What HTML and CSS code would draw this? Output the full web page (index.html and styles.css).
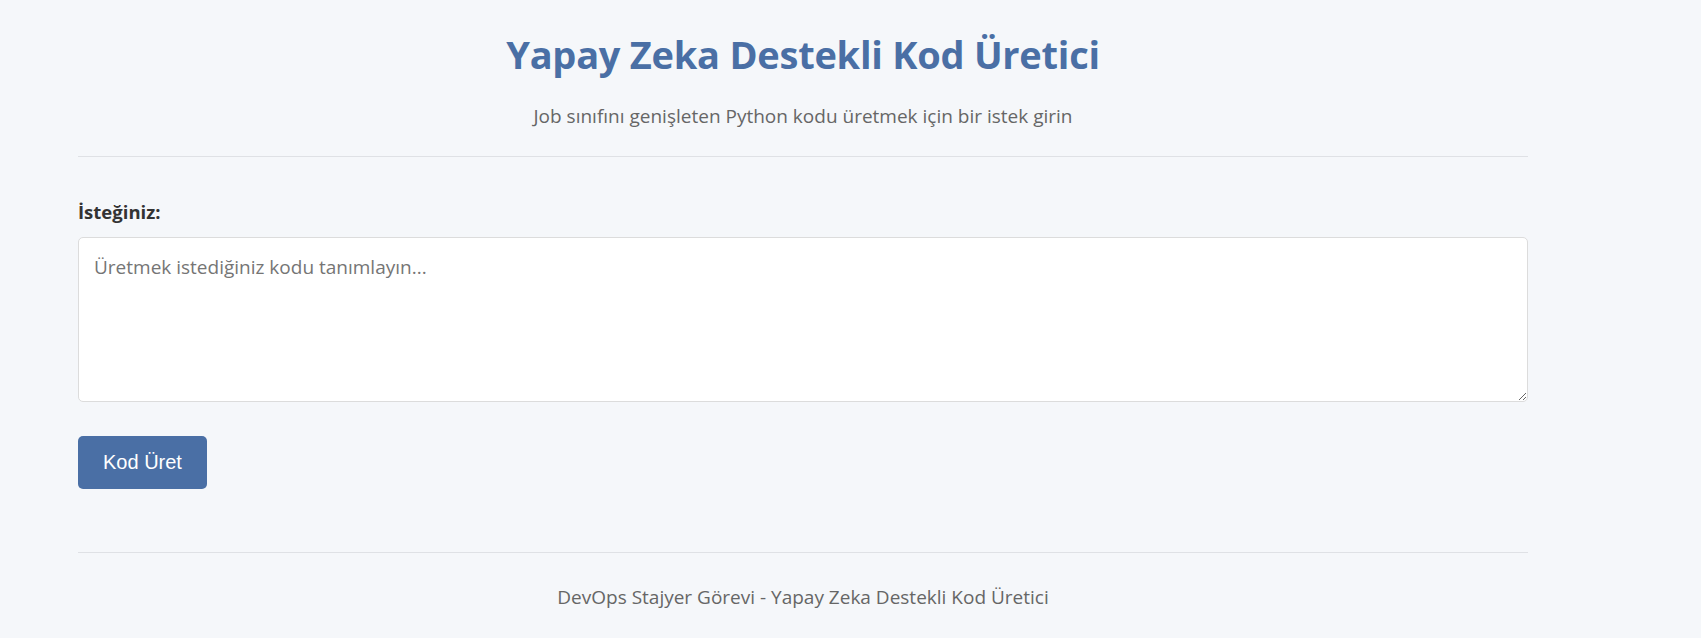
FILE: index.html
```html
<!DOCTYPE html>
<html lang="tr">
<head>
<meta charset="utf-8">
<title>Yapay Zeka Destekli Kod Üretici</title>
<link rel="stylesheet" href="styles.css">
</head>
<body>
<div class="container">
  <header class="header">
    <h1 class="title">Yapay Zeka Destekli Kod Üretici</h1>
    <p class="subtitle">Job sınıfını genişleten Python kodu üretmek için bir istek girin</p>
  </header>
  <main class="form">
    <label class="label" for="prompt">İsteğiniz:</label>
    <textarea id="prompt" class="input" placeholder="Üretmek istediğiniz kodu tanımlayın..."></textarea>
    <button class="btn" type="button">Kod Üret</button>
  </main>
  <footer class="footer">
    <p class="footer-text">DevOps Stajyer Görevi - Yapay Zeka Destekli Kod Üretici</p>
  </footer>
</div>
</body>
</html>
```
FILE: styles.css
```css
html, body {
  margin: 0;
  padding: 0;
  background: #f5f7fa;
}
body {
  font-family: "Open Sans", "Noto Sans", sans-serif;
  color: #333;
}
.container {
  width: 1450px;
  margin-left: 78px;
  display: flex;
  flex-direction: column;
}
.header {
  text-align: center;
  border-bottom: 1px solid #dfe1e5;
  padding-bottom: 25px;
}
.title {
  margin: 30px 0 0;
  font-size: 38px;
  line-height: 48px;
  letter-spacing: -0.25px;
  font-weight: 700;
  color: #4a6fa5;
}
.subtitle {
  margin: 23px 0 0;
  font-size: 19px;
  line-height: 30px;
  color: #666;
}
.form {
  display: flex;
  flex-direction: column;
  align-items: flex-start;
  padding-top: 40px;
}
.label {
  font-size: 18.5px;
  line-height: 30px;
  font-weight: 700;
  color: #333;
}
.input {
  margin-top: 10px;
  width: 100%;
  height: 165px;
  box-sizing: border-box;
  padding: 17px 15px 15px;
  border: 1px solid #dcdcdc;
  border-radius: 5px;
  background: #fff;
  font-family: "Open Sans", "Noto Sans", sans-serif;
  font-size: 19px;
  line-height: 24px;
  color: #333;
  resize: vertical;
}
.input::placeholder {
  color: #757575;
}
.btn {
  margin-top: 34px;
  padding: 15px 25px;
  border: none;
  border-radius: 5px;
  background: #4a6fa5;
  color: #fff;
  font-family: "Liberation Sans", Arial, sans-serif;
  font-size: 20px;
  line-height: 23px;
  cursor: pointer;
}
.footer {
  margin-top: 63px;
  border-top: 1px solid #dfe1e5;
  padding-top: 29px;
  text-align: center;
}
.footer-text {
  margin: 0;
  font-size: 19px;
  line-height: 30px;
  color: #666;
}
```
